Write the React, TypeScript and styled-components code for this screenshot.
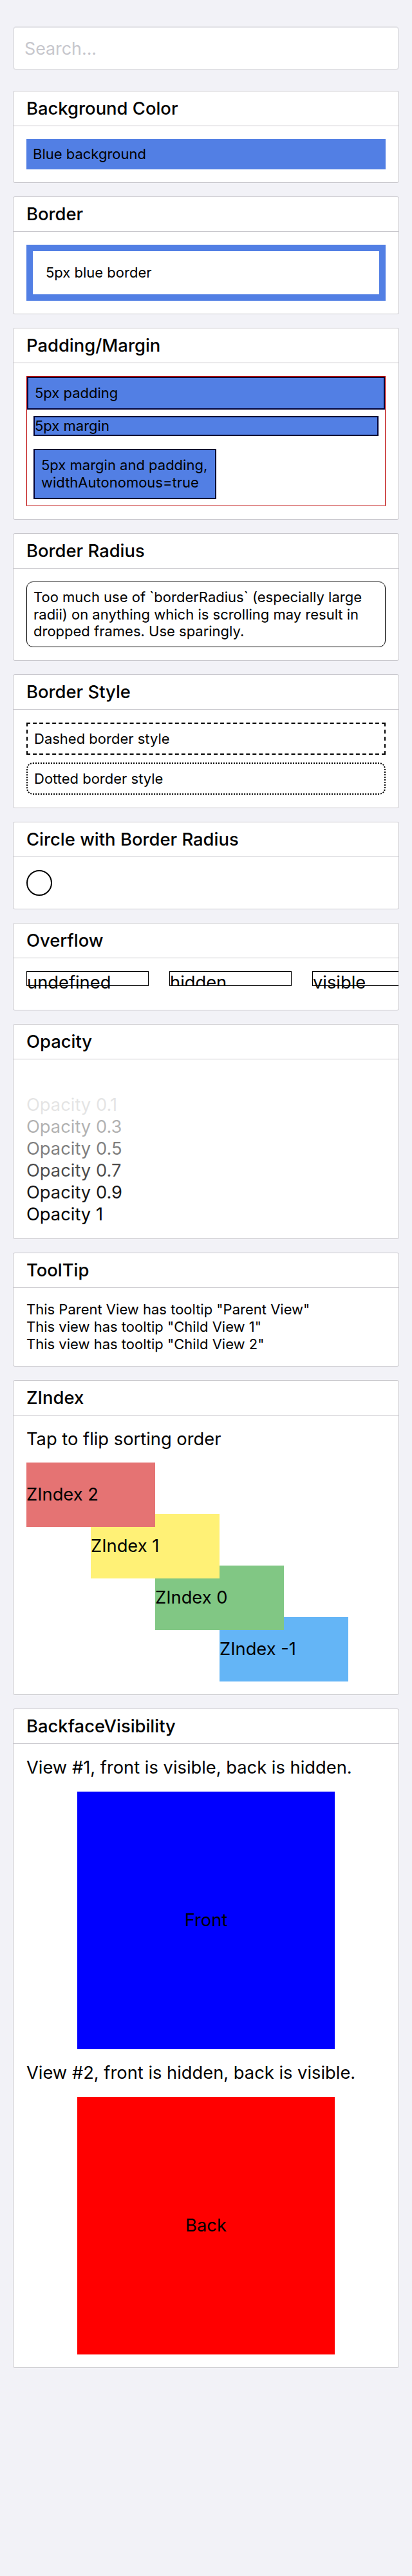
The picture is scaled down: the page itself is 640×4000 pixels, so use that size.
import React from 'react';
import styled, { createGlobalStyle } from 'styled-components';

const FONT = `Inter, "Noto Sans", sans-serif`;

const Global = createGlobalStyle`
  html, body { margin: 0; padding: 0; background: #f2f2f7; }
  body { font-family: ${FONT}; color: #000; }
  * { box-sizing: border-box; }
`;

const Page = styled.div`
  display: flex;
  flex-direction: column;
  padding: 41px 20px 0;
  min-height: 4000px;
`;

const SearchInput = styled.input`
  height: 68px;
  border: 2px solid #e2e2e6;
  border-radius: 5px;
  background: #fff;
  padding: 0 16px;
  font-family: ${FONT};
  font-size: 26.8px;
  color: #000;
  margin: 0 0 32px;
  outline: none;
  &::placeholder { color: #c7c7cd; }
`;

const Card = styled.section`
  background: #fff;
  border: 1px solid #c8c7cc;
  border-radius: 3px;
  overflow: hidden;
  margin-bottom: 21px;
`;

const CardTitle = styled.h2`
  margin: 0;
  padding: 10px 20px;
  border-bottom: 1px solid #c8c7cc;
  font-size: 27.4px;
  line-height: 33px;
  font-weight: 500;
`;

const CardBody = styled.div`
  padding: 20px;
  display: flex;
  flex-direction: column;
`;

const BlueBox = styled.div`
  background: #527fe4;
  padding: 10px;
  font-size: 22px;
  line-height: 27px;
`;

const BorderBox = styled.div`
  border: 10px solid #527fe4;
  padding: 20px;
  font-size: 22px;
  line-height: 27px;
`;

const RedFrame = styled.div`
  border: 1px solid #bb0000;
  display: flex;
  flex-direction: column;
  align-items: stretch;
`;

const NavyBox = styled.div<{ $margin?: boolean; $padding?: boolean; $auto?: boolean }>`
  background: #527fe4;
  border: 2px solid #000033;
  font-size: 22px;
  line-height: 27px;
  margin: ${(p) => (p.$margin ? '10px' : '0')};
  padding: ${(p) => (p.$padding ? '10px' : '0')};
  ${(p) => (p.$auto ? 'align-self: flex-start; max-width: 284px;' : '')}
`;

const RoundBox = styled.div`
  border: 1px solid #000;
  border-radius: 10px;
  padding: 10px;
  font-size: 22px;
  line-height: 26.5px;
`;

const StyledBorder = styled.div<{ $style: 'dashed' | 'dotted' }>`
  border: 2px ${(p) => p.$style} #000;
  border-radius: ${(p) => (p.$style === 'dotted' ? '10px' : '0')};
  padding: 10px;
  font-size: 22px;
  line-height: 26px;
  & + & { margin-top: 12px; }
`;

const Circle = styled.div`
  width: 40px;
  height: 40px;
  border: 2px solid #000;
  border-radius: 50%;
`;

const OverflowRow = styled.div`
  display: flex;
  height: 40px;
  align-items: flex-start;
`;

const OverflowBox = styled.div<{ $hidden?: boolean }>`
  flex: 0 0 190px;
  width: 190px;
  height: 23px;
  margin-right: 32px;
  border: 1px solid #000;
  overflow: ${(p) => (p.$hidden ? 'hidden' : 'visible')};
  font-size: 27.3px;
  line-height: 34px;
  white-space: nowrap;
`;

const OpacityText = styled.div<{ $opacity: number }>`
  font-size: 27.3px;
  line-height: 34px;
  opacity: ${(p) => p.$opacity};
`;

const TooltipText = styled.div`
  font-size: 22px;
  line-height: 27px;
`;

const Caption = styled.div<{ $top?: number; $bottom?: number }>`
  font-size: 27.3px;
  line-height: 34px;
  margin-top: ${(p) => p.$top ?? 0}px;
  margin-bottom: ${(p) => p.$bottom ?? 0}px;
`;

const ZStack = styled.div`
  display: flex;
  flex-direction: column;
  align-items: flex-start;
  isolation: isolate;
`;

const ZBox = styled.div<{ $bg: string; $z: number; $offset: number; $first?: boolean }>`
  position: relative;
  z-index: ${(p) => p.$z};
  width: 200px;
  height: 100px;
  margin-left: ${(p) => p.$offset}px;
  margin-top: ${(p) => (p.$first ? 0 : -20)}px;
  background: ${(p) => p.$bg};
  display: flex;
  align-items: center;
  font-size: 27.3px;
  line-height: 34px;
`;

const Face = styled.div<{ $bg: string }>`
  align-self: center;
  width: 400px;
  height: 400px;
  background: ${(p) => p.$bg};
  display: flex;
  align-items: center;
  justify-content: center;
  font-size: 27.3px;
  line-height: 34px;
`;

const zBoxes = [
  { label: 'ZIndex 2', bg: '#e57373', z: 2, offset: 0 },
  { label: 'ZIndex 1', bg: '#fff176', z: 1, offset: 100 },
  { label: 'ZIndex 0', bg: '#81c784', z: 0, offset: 200 },
  { label: 'ZIndex -1', bg: '#64b5f6', z: -1, offset: 300 },
];

export default function App() {
  return (
    <>
      <Global />
      <Page>
        <SearchInput placeholder="Search..." />

        <Card>
          <CardTitle>Background Color</CardTitle>
          <CardBody>
            <BlueBox>Blue background</BlueBox>
          </CardBody>
        </Card>

        <Card>
          <CardTitle>Border</CardTitle>
          <CardBody>
            <BorderBox>5px blue border</BorderBox>
          </CardBody>
        </Card>

        <Card>
          <CardTitle>Padding/Margin</CardTitle>
          <CardBody>
            <RedFrame>
              <NavyBox $padding>5px padding</NavyBox>
              <NavyBox $margin>5px margin</NavyBox>
              <NavyBox $margin $padding $auto>
                5px margin and padding, widthAutonomous=true
              </NavyBox>
            </RedFrame>
          </CardBody>
        </Card>

        <Card>
          <CardTitle>Border Radius</CardTitle>
          <CardBody>
            <RoundBox>
              Too much use of `borderRadius` (especially large radii) on anything which is
              scrolling may result in dropped frames. Use sparingly.
            </RoundBox>
          </CardBody>
        </Card>

        <Card>
          <CardTitle>Border Style</CardTitle>
          <CardBody>
            <StyledBorder $style="dashed">Dashed border style</StyledBorder>
            <StyledBorder $style="dotted">Dotted border style</StyledBorder>
          </CardBody>
        </Card>

        <Card>
          <CardTitle>Circle with Border Radius</CardTitle>
          <CardBody>
            <Circle />
          </CardBody>
        </Card>

        <Card>
          <CardTitle>Overflow</CardTitle>
          <CardBody>
            <OverflowRow>
              <OverflowBox>undefined</OverflowBox>
              <OverflowBox $hidden>hidden</OverflowBox>
              <OverflowBox>visible</OverflowBox>
            </OverflowRow>
          </CardBody>
        </Card>

        <Card>
          <CardTitle>Opacity</CardTitle>
          <CardBody>
            {[0, 0.1, 0.3, 0.5, 0.7, 0.9, 1].map((o) => (
              <OpacityText key={o} $opacity={o}>
                Opacity {o}
              </OpacityText>
            ))}
          </CardBody>
        </Card>

        <Card>
          <CardTitle>ToolTip</CardTitle>
          <CardBody>
            <TooltipText title="Parent View">
              This Parent View has tooltip "Parent View"
              <TooltipText title="Child View 1">This view has tooltip "Child View 1"</TooltipText>
              <TooltipText title="Child View 2">This view has tooltip "Child View 2"</TooltipText>
            </TooltipText>
          </CardBody>
        </Card>

        <Card>
          <CardTitle>ZIndex</CardTitle>
          <CardBody>
            <Caption $bottom={19}>Tap to flip sorting order</Caption>
            <ZStack>
              {zBoxes.map((b, i) => (
                <ZBox key={b.label} $first={i === 0} $bg={b.bg} $z={b.z} $offset={b.offset}>
                  {b.label}
                </ZBox>
              ))}
            </ZStack>
          </CardBody>
        </Card>

        <Card>
          <CardTitle>BackfaceVisibility</CardTitle>
          <CardBody>
            <Caption $bottom={20}>View #1, front is visible, back is hidden.</Caption>
            <Face $bg="#0000ff">Front</Face>
            <Caption $top={20} $bottom={20}>View #2, front is hidden, back is visible.</Caption>
            <Face $bg="#ff0000">Back</Face>
          </CardBody>
        </Card>
      </Page>
    </>
  );
}
